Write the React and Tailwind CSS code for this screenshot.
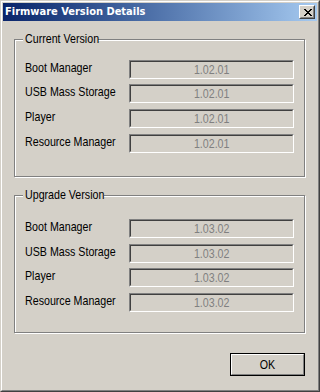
import React from 'react';

const current = [
  { label: 'Boot Manager', value: '1.02.01' },
  { label: 'USB Mass Storage', value: '1.02.01' },
  { label: 'Player', value: '1.02.01' },
  { label: 'Resource Manager', value: '1.02.01' },
];

const upgrade = [
  { label: 'Boot Manager', value: '1.03.02' },
  { label: 'USB Mass Storage', value: '1.03.02' },
  { label: 'Player', value: '1.03.02' },
  { label: 'Resource Manager', value: '1.03.02' },
];

// classic 8x7 close glyph, row by row
const closeGlyph = [
  [0, 2], [6, 2],
  [1, 2], [5, 2],
  [2, 4],
  [3, 2],
  [2, 4],
  [1, 2], [5, 2],
  [0, 2], [6, 2],
];
const glyphRows = [0, 0, 1, 1, 2, 3, 4, 5, 5, 6, 6];

function Narrow({ children, center }) {
  return (
    <span className={'inline-block whitespace-nowrap scale-x-[0.82] ' + (center ? 'origin-center' : 'origin-left')}>
      {children}
    </span>
  );
}

function CloseButton() {
  return (
    <div className="w-[16px] h-[14px] border border-t-white border-l-white border-r-[#404040] border-b-[#404040]">
      <div className="w-full h-full border border-t-[#d4d0c8] border-l-[#d4d0c8] border-r-[#808080] border-b-[#808080] bg-[#d4d0c8] flex items-center justify-center">
        <svg width="8" height="7" viewBox="0 0 8 7" shapeRendering="crispEdges" className="ml-[1px]">
          {closeGlyph.map(([x, w], i) => (
            <rect key={i} x={x} y={glyphRows[i]} width={w} height="1" fill="#000" />
          ))}
        </svg>
      </div>
    </div>
  );
}

function Field({ value }) {
  return (
    <div className="w-[165px] h-[19px] border border-t-[#808080] border-l-[#808080] border-r-white border-b-white">
      <div className="w-full h-full border border-t-[#404040] border-l-[#404040] border-r-[#d4d0c8] border-b-[#d4d0c8] bg-[#d4d0c8] text-center text-[#808080] leading-[15px]">
        <Narrow center>{value}</Narrow>
      </div>
    </div>
  );
}

function GroupBox({ title, width, rows, top, gaps }) {
  return (
    <div className="relative h-[138px] border border-[#808080] shadow-[inset_1px_1px_0_#fff,1px_1px_0_#fff]">
      <div
        className="absolute left-[8px] top-[-9px] pl-[2px] bg-[#d4d0c8] text-black leading-[16px] overflow-visible"
        style={{ width }}
      >
        <Narrow>{title}</Narrow>
      </div>
      <div className="flex flex-col pl-[10px]" style={{ paddingTop: top }}>
        {rows.map((r, i) => (
          <div key={i} className="flex items-start" style={{ marginTop: i ? gaps[i - 1] : 0 }}>
            <div className="w-[104px] leading-[16px] text-black">
              <Narrow>{r.label}</Narrow>
            </div>
            <Field value={r.value} />
          </div>
        ))}
      </div>
    </div>
  );
}

export default function App() {
  return (
    <div className="w-[320px] h-[392px] border border-t-[#d4d0c8] border-l-[#d4d0c8] border-r-[#404040] border-b-[#404040] bg-[#d4d0c8] text-[13px] font-['Liberation_Sans',Arial,sans-serif]">
      <div className="w-full h-full border border-t-white border-l-white border-r-[#808080] border-b-[#808080] p-[1px] flex flex-col">
        {/* Title bar */}
        <div className="h-[18px] bg-gradient-to-r from-[#0a246a] to-[#a6caf0] flex items-start justify-between pl-[2px] pr-[2px]">
          <span className="text-white font-bold text-[11px] leading-[18px] font-['DejaVu_Sans_Condensed','DejaVu_Sans',sans-serif]">
            Firmware Version Details
          </span>
          <div className="mt-[2px]">
            <CloseButton />
          </div>
        </div>

        {/* Body */}
        <div className="flex-1 flex flex-col pl-[11px] pr-[12px]">
          <div className="mt-[18px]">
            <GroupBox title="Current Version" width={75} rows={current} top={20} gaps={[5, 6, 6]} />
          </div>
          <div className="mt-[18px]">
            <GroupBox title="Upgrade Version" width={81} rows={upgrade} top={23} gaps={[6, 5, 6]} />
          </div>
          <div className="flex justify-end mt-[20px]">
            <button className="w-[75px] h-[23px] border border-black">
              <div className="w-full h-full border border-t-white border-l-white border-r-[#808080] border-b-[#808080] flex items-center justify-center text-black leading-[16px]">
                <Narrow center>OK</Narrow>
              </div>
            </button>
          </div>
        </div>
      </div>
    </div>
  );
}
